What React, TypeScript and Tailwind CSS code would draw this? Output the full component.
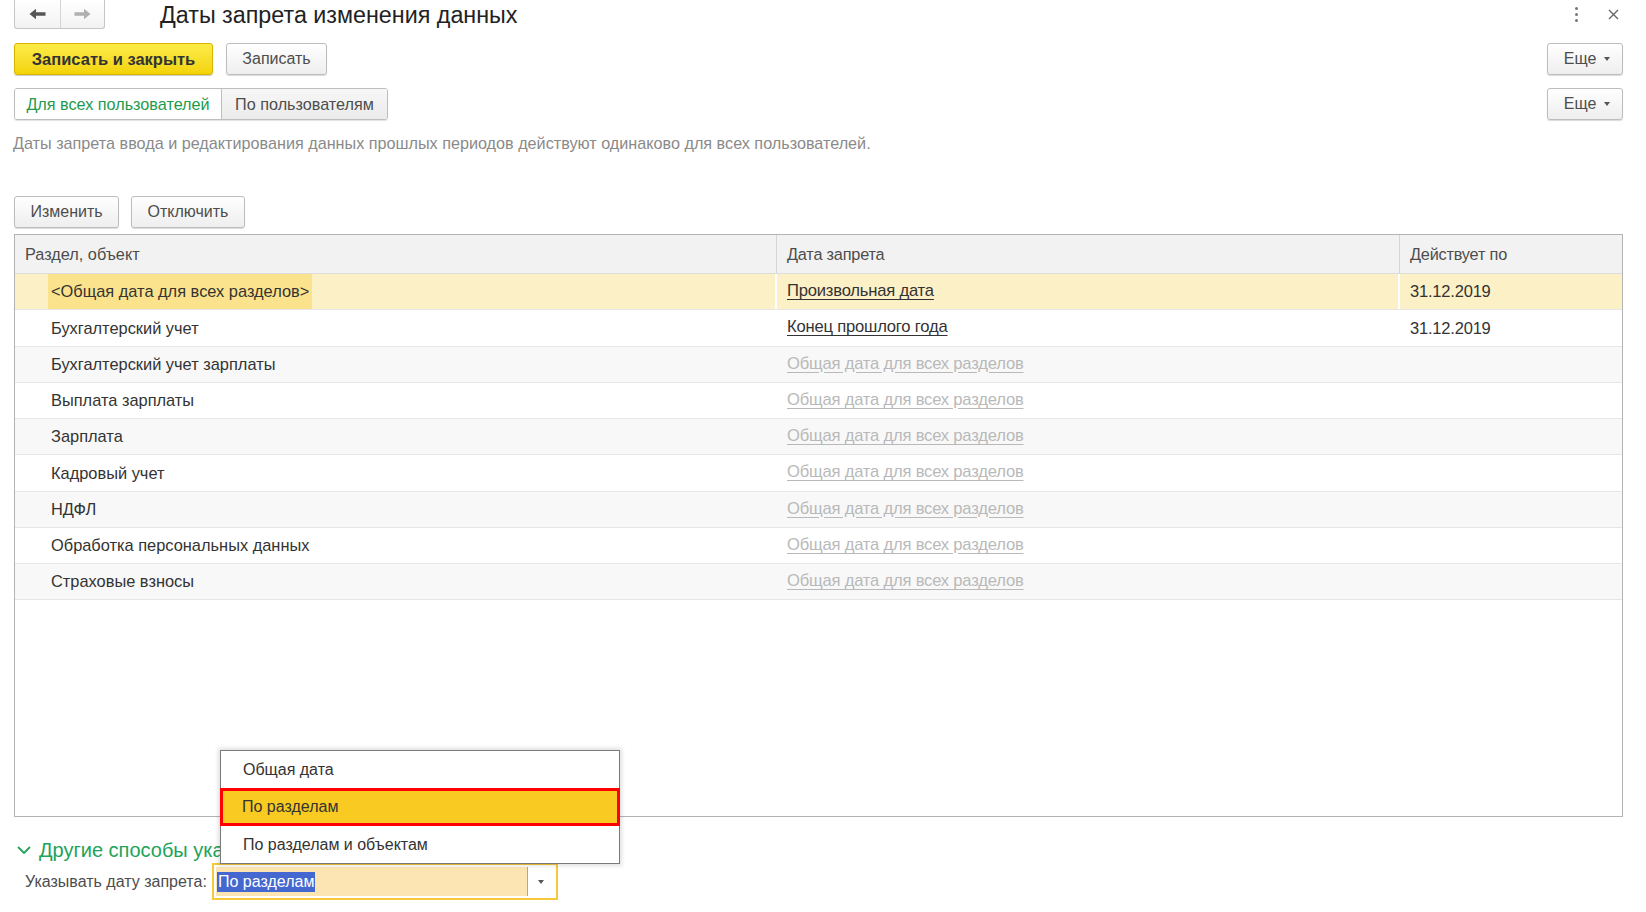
import React from 'react';

const rows = [
  { name: '<Общая дата для всех разделов>', date: 'Произвольная дата', until: '31.12.2019', kind: 'active' },
  { name: 'Бухгалтерский учет', date: 'Конец прошлого года', until: '31.12.2019', kind: 'link' },
  { name: 'Бухгалтерский учет зарплаты', date: 'Общая дата для всех разделов', until: '', kind: 'muted' },
  { name: 'Выплата зарплаты', date: 'Общая дата для всех разделов', until: '', kind: 'muted' },
  { name: 'Зарплата', date: 'Общая дата для всех разделов', until: '', kind: 'muted' },
  { name: 'Кадровый учет', date: 'Общая дата для всех разделов', until: '', kind: 'muted' },
  { name: 'НДФЛ', date: 'Общая дата для всех разделов', until: '', kind: 'muted' },
  { name: 'Обработка персональных данных', date: 'Общая дата для всех разделов', until: '', kind: 'muted' },
  { name: 'Страховые взносы', date: 'Общая дата для всех разделов', until: '', kind: 'muted' },
];

// condensed columns (Arial Narrow in the original)
const narrow = "font-['Liberation_Sans_Narrow','Arial_Narrow','Liberation_Sans',sans-serif] tracking-[-0.2px]";

function Button({ children, className = '' }: { children: React.ReactNode; className?: string }) {
  return (
    <div
      className={`h-[32px] flex items-center justify-center rounded-[3px] border border-[#bdbdbd] bg-gradient-to-b from-white to-[#eeeeee] shadow-[0_1px_1px_rgba(0,0,0,0.15)] text-[16px] text-[#4d4d4d] ${className}`}
    >
      {children}
    </div>
  );
}

function MoreButton() {
  return (
    <Button className="w-[76px] gap-[8px] pl-[4px]">
      <span>Еще</span>
      <span className="w-0 h-0 border-l-[3px] border-r-[3px] border-t-[4px] border-l-transparent border-r-transparent border-t-[#555]" />
    </Button>
  );
}

export default function App() {
  return (
    <div className="relative w-[1646px] h-[912px] overflow-hidden bg-white font-['Liberation_Sans',Arial,sans-serif] text-[#333]">
      {/* title bar */}
      <div className="flex items-start h-[29px] pl-[14px] pr-[27px]">
        <div className="flex h-[29px] w-[91px] border border-t-0 border-[#c6c6c6] rounded-b-[3px] bg-gradient-to-b from-white to-[#f2f2f2]">
          <div className="w-[46px] flex items-center justify-center border-r border-[#d4d4d4]">
            <svg width="17" height="12" viewBox="0 0 17 12">
              <path d="M0.5 6 L7 0.8 V4.3 H16.5 V7.7 H7 V11.2 Z" fill="#555" />
            </svg>
          </div>
          <div className="flex-1 flex items-center justify-center">
            <svg width="17" height="12" viewBox="0 0 17 12">
              <path d="M16.5 6 L10 0.8 V4.3 H0.5 V7.7 H10 V11.2 Z" fill="#b0b0b0" />
            </svg>
          </div>
        </div>
        <h1 className="ml-[55px] text-[23.3px] leading-[30px] text-[#222]">Даты запрета изменения данных</h1>
        <div className="ml-auto flex items-center gap-[30px] h-[29px]">
          <div className="flex flex-col gap-[3px]">
            <span className="w-[3px] h-[3px] rounded-full bg-[#777]" />
            <span className="w-[3px] h-[3px] rounded-full bg-[#777]" />
            <span className="w-[3px] h-[3px] rounded-full bg-[#777]" />
          </div>
          <svg width="11" height="11" viewBox="0 0 11 11">
            <path d="M1 1 L10 10 M10 1 L1 10" stroke="#666" strokeWidth="1.4" />
          </svg>
        </div>
      </div>

      {/* command bar */}
      <div className="flex items-center mt-[14px] pl-[14px] pr-[23px]">
        <div className="h-[32px] w-[199px] flex items-center justify-center rounded-[3px] border border-[#d5b500] bg-gradient-to-b from-[#fdec45] to-[#f3d300] shadow-[0_1px_1px_rgba(0,0,0,0.2)] text-[16.5px] font-bold text-[#333]">
          Записать и закрыть
        </div>
        <Button className="ml-[13px] w-[101px]">Записать</Button>
        <div className="ml-auto">
          <MoreButton />
        </div>
      </div>

      {/* tabs */}
      <div className="flex items-center mt-[13px] pl-[14px] pr-[23px]">
        <div className="flex h-[32px] rounded-[3px] border border-[#bdbdbd] shadow-[0_1px_1px_rgba(0,0,0,0.12)] text-[16.2px] overflow-hidden">
          <div className="w-[207px] flex items-center justify-center bg-white text-[#1e9b4c] border-r border-[#bdbdbd]">
            Для всех пользователей
          </div>
          <div className="w-[165px] flex items-center justify-center bg-gradient-to-b from-[#f7f7f7] to-[#ebebeb] text-[#4d4d4d]">
            По пользователям
          </div>
        </div>
        <div className="ml-auto">
          <MoreButton />
        </div>
      </div>

      {/* description */}
      <p className="mt-[13px] pl-[13px] text-[16.2px] leading-[20px] text-[#8a8a8a]">
        Даты запрета ввода и редактирования данных прошлых периодов действуют одинаково для всех пользователей.
      </p>

      {/* table buttons */}
      <div className="flex items-center gap-[12px] mt-[43px] pl-[14px]">
        <Button className="w-[105px]">Изменить</Button>
        <Button className="w-[114px]">Отключить</Button>
      </div>

      {/* table */}
      <div className="mt-[6px] ml-[14px] w-[1609px] h-[583px] border border-[#b3b3b3] bg-white">
        <div className="flex h-[39px] bg-[#f2f2f2] border-b border-[#dcdcdc] text-[16.3px] text-[#4d4d4d]">
          <div className="w-[762px] flex items-center pl-[10px] border-r border-[#d6d6d6]">Раздел, объект</div>
          <div className={`w-[623px] flex items-center pl-[10px] border-r border-[#d6d6d6] ${narrow}`}>Дата запрета</div>
          <div className={`flex-1 flex items-center pl-[10px] ${narrow}`}>Действует по</div>
        </div>
        {rows.map((r, i) => {
          const bg = r.kind === 'active' ? 'bg-[#fcf0c6]' : i % 2 === 0 ? 'bg-[#f8f8f8]' : 'bg-white';
          const sep = r.kind === 'active' ? 'border-white' : 'border-transparent';
          return (
            <div key={r.name} className={`flex h-[36.25px] border-b border-[#e6e6e6] text-[16.4px] ${bg}`}>
              <div className={`w-[762px] flex items-stretch pl-[33px] border-r-2 ${sep}`}>
                <span className={`flex items-center px-[3px] ${r.kind === 'active' ? 'bg-[#fbe38d]' : ''}`}>{r.name}</span>
              </div>
              <div className={`w-[623px] flex items-center pl-[10px] border-r-2 ${sep} ${narrow} text-[16.6px]`}>
                <span className={`underline underline-offset-[3px] ${r.kind === 'muted' ? 'text-[#b9b9b9]' : 'text-[#333]'}`}>{r.date}</span>
              </div>
              <div className={`flex-1 flex items-center pl-[10px] ${narrow} text-[16.5px]`}>{r.until}</div>
            </div>
          );
        })}
      </div>

      {/* other ways */}
      <div className="flex items-center gap-[8px] mt-[21px] pl-[17px] h-[24px]">
        <svg width="14" height="9" viewBox="0 0 14 9">
          <path d="M1 1 L7 7 L13 1" stroke="#22a35a" strokeWidth="1.8" fill="none" />
        </svg>
        <span className="text-[20px] text-[#22a35a]">Другие способы указания дат запрета</span>
      </div>

      <div className="flex items-center mt-[1px] pl-[25px]">
        <span className="text-[16px] text-[#4d4d4d] w-[187px]">Указывать дату запрета:</span>
        <div className="w-[346px] h-[37px] border-2 border-[#f6c93a] p-[2px] bg-white flex">
          <div className="flex-1 flex items-center bg-[#fde5b3] pl-[1px] border-r border-[#a8a8a8]">
            <span className="bg-[#4468d0] text-white text-[16px] leading-[20px] px-[1px]">По разделам</span>
          </div>
          <div className="w-[26px] flex items-center justify-center">
            <span className="w-0 h-0 border-l-[3px] border-r-[3px] border-t-[4px] border-l-transparent border-r-transparent border-t-[#555]" />
          </div>
        </div>
      </div>

      {/* dropdown list */}
      <div className="absolute left-[220px] top-[750px] w-[400px] bg-white border border-[#7a7a7a] shadow-[0_0_4px_2px_rgba(0,0,0,0.12)] text-[16px] text-[#333]">
        <div className="h-[37px] flex items-center pl-[22px]">Общая дата</div>
        <div className="h-[38px] flex items-center pl-[19px] bg-[#f8ca22] border-[3px] border-[#ff0000] -mx-[1px]">По разделам</div>
        <div className="h-[37px] flex items-center pl-[22px]">По разделам и объектам</div>
      </div>
    </div>
  );
}
